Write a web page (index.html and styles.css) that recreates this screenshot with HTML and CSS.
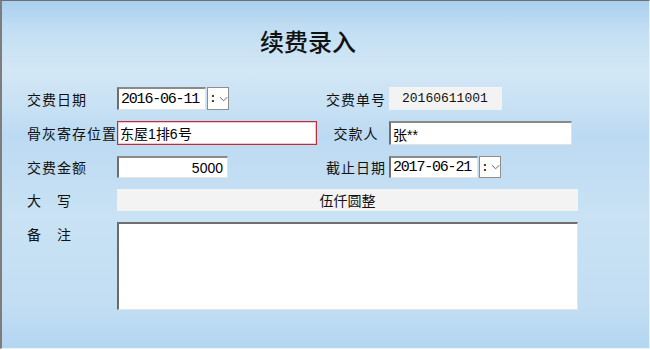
FILE: index.html
```html
<!doctype html>
<html lang="zh-CN">
  <head>
    <meta charset="UTF-8" />
    <meta name="viewport" content="width=device-width, initial-scale=1.0" />
    <title>续费录入</title>
    <link rel="stylesheet" href="styles.css">
  </head>
  <body>

    <div class="window">
      <h2 class="title">续费录入</h2>

      <form class="renew-form">
        <!-- row 1 -->
        <label class="lbl">交费日期</label>
        <div class="field">
          <input class="box date" type="text" value="2016-06-11" />
          <span class="spin"><i>:</i><svg width="10" height="6" viewBox="0 0 10 6"><polyline points="1,1 5,5 9,1" fill="none" stroke="#5a5a5a" stroke-width="1"/></svg></span>
        </div>
        <label class="lbl lbl-r">交费单号</label>
        <div class="field">
          <span class="readonly serial">20160611001</span>
        </div>

        <!-- row 2 -->
        <label class="lbl">骨灰寄存位置</label>
        <div class="field">
          <input class="box place" type="text" value="东屋1排6号" />
        </div>
        <label class="lbl lbl-r">交款人</label>
        <div class="field">
          <input class="box payer" type="text" value="张**" />
        </div>

        <!-- row 3 -->
        <label class="lbl">交费金额</label>
        <div class="field">
          <input class="box amount" type="text" value="5000" />
        </div>
        <label class="lbl lbl-r">截止日期</label>
        <div class="field">
          <input class="box date" type="text" value="2017-06-21" />
          <span class="spin"><i>:</i><svg width="10" height="6" viewBox="0 0 10 6"><polyline points="1,1 5,5 9,1" fill="none" stroke="#5a5a5a" stroke-width="1"/></svg></span>
        </div>

        <!-- row 4 -->
        <label class="lbl">大　写</label>
        <div class="field wide">
          <span class="readonly upper">伍仟圆整</span>
        </div>

        <!-- row 5 -->
        <label class="lbl lbl-top">备　注</label>
        <div class="field wide">
          <textarea class="memo"></textarea>
        </div>
      </form>
    </div>

  </body>
</html>
```

FILE: styles.css
```css
body {
  margin: 0;
  background-color: #ffffff;
  font-family: "Noto Sans CJK SC", "Noto Sans", sans-serif;
}

.window {
  box-sizing: border-box;
  width: 650px;
  height: 349px;
  border-top: 1px solid #6f6f6f;
  border-left: 2px solid #7d7d7d;
  border-right: 1px solid #e6f1fa;
  border-bottom: 1px solid #f2f2f2;
  background: linear-gradient(180deg, #a9d0ee 0px, #c2def3 28px, #d3e7f6 70px, #c8e1f4 105px, #bcdaf2 135px, #c9e2f4 215px, #c3def3 300px, #b3d6f1 348px);
}

.title {
  margin: 0;
  padding: 26px 0 0 258px;
  height: 35px;
  font-size: 24px;
  line-height: 28px;
  font-weight: 500;
  color: #111111;
}

.renew-form {
  display: grid;
  grid-template-columns: 90px 200px 72px 189px;
  grid-template-rows: 23px 24px 22px 22px 88px;
  row-gap: 11px;
  padding: 25px 0 0 25px;
}

.lbl {
  display: flex;
  align-items: center;
  font-size: 14px;
  letter-spacing: 1px;
  color: #111111;
  white-space: nowrap;
}
.lbl-r {
  justify-content: center;
  padding-left: 6px;
}
.lbl-top {
  align-items: flex-start;
  padding-top: 2px;
}

.field {
  display: flex;
  gap: 1px;
}
.field.wide {
  grid-column: 2 / 5;
}

.box {
  box-sizing: border-box;
  height: 100%;
  margin: 0;
  padding: 0 2px;
  background-color: #ffffff;
  border-style: solid;
  border-width: 2px 1px 1px 2px;
  border-color: #8a8a8a #e2e2e2 #e2e2e2 #6e6e6e;
  color: #000000;
  outline: none;
}
.date {
  width: 89px;
  font-family: "Liberation Mono", monospace;
  font-size: 15px;
  letter-spacing: -1.2px;
}
.place {
  width: 200px;
  font-size: 14px;
  border: 1px solid #bb2f3d;
  box-shadow: inset 0 0 0 1px #f3c7cb;
}
.payer {
  width: 183px;
  font-size: 14px;
}
.amount {
  width: 111px;
  text-align: right;
  padding-right: 4px;
  font-family: "Liberation Sans", sans-serif;
  font-size: 14px;
}

.spin {
  box-sizing: border-box;
  display: flex;
  align-items: center;
  gap: 2px;
  width: 22px;
  height: 100%;
  padding-left: 1px;
  background-color: #ffffff;
  border: 1px solid #8e8e8e;
}
.spin i {
  font-style: normal;
  font-family: "Liberation Mono", monospace;
  font-size: 13px;
  color: #000000;
}

.readonly {
  box-sizing: border-box;
  display: flex;
  align-items: center;
  height: 100%;
  background-color: #f3f3f3;
  color: #111111;
}
.serial {
  width: 113px;
  padding-left: 13px;
  font-family: "Liberation Mono", monospace;
  font-size: 13px;
}
.upper {
  width: 461px;
  justify-content: center;
  align-items: flex-start;
  padding-top: 1px;
  font-size: 14px;
}

.memo {
  box-sizing: border-box;
  width: 461px;
  height: 88px;
  margin: 0;
  resize: none;
  background-color: #ffffff;
  border-style: solid;
  border-width: 2px 1px 1px 2px;
  border-color: #707070 #e4e4e4 #e4e4e4 #6a6a6a;
}
```
